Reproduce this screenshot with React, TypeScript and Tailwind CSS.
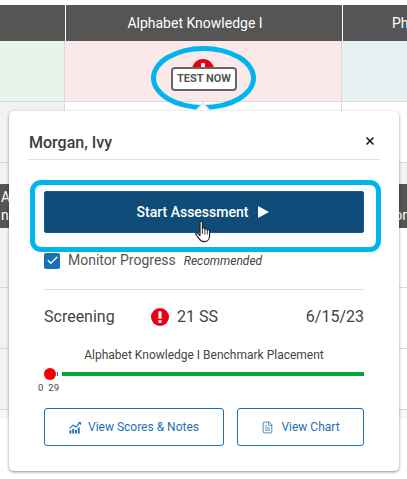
import { Check, FileText, X } from "lucide-react";

function AlertDot({ className }: { className: string }) {
  return (
    <span className={`flex items-center justify-center rounded-full bg-[#e60012] ${className}`}>
      <svg viewBox="0 0 18 18" className="h-full w-full">
        <rect x="7.4" y="3.2" width="3.2" height="7.6" rx="0.8" fill="#fff" />
        <rect x="7.4" y="12" width="3.2" height="3" rx="0.8" fill="#fff" />
      </svg>
    </span>
  );
}

function ChartIcon() {
  return (
    <svg viewBox="0 0 14 13" className="h-[13px] w-[13px]" fill="#1c6fb5">
      <rect x="0.5" y="9.5" width="2" height="3.5" />
      <rect x="3.5" y="8" width="2" height="5" />
      <rect x="6.5" y="9" width="2" height="4" />
      <rect x="9.5" y="6.5" width="2" height="6.5" />
      <path d="M0.5 7.5 L4.5 4 L7.5 6 L11.5 1.5" fill="none" stroke="#1c6fb5" strokeWidth="1.2" />
      <path d="M9.5 0.5 H13 V4 Z" />
    </svg>
  );
}

function HandCursor() {
  return (
    <svg viewBox="0 0 18 24" className="absolute left-[195px] top-[220px] h-6 w-[18px]">
      <path
        d="M5 2.2c0-1.5 2.4-1.5 2.4 0v6.3c.2-1.2 2.4-1.2 2.5.2v.6c.3-1.1 2.3-1 2.4.3v.7c.4-.9 2.2-.7 2.3.6v4.6c0 3-1.7 6.2-5.2 6.2-2.6 0-4-.9-5.1-2.8L1 14.6c-.7-1.3.9-2.3 1.9-1.2L5 15.5Z"
        fill="#fff"
        stroke="#222"
        strokeWidth="1.2"
        strokeLinejoin="round"
      />
      <path d="M7.4 9v5M9.9 9.5v5M12.3 10.5v4" stroke="#222" strokeWidth="0.9" fill="none" />
    </svg>
  );
}

const Cell = ({ className }: { className: string }) => <div className={className} />;

function Row({ height, left = "bg-[#f2f2f2]", mid = "bg-white", right = "bg-white" }: { height: string; left?: string; mid?: string; right?: string }) {
  return (
    <div className={`grid grid-cols-[65px_277px_65px] border-b border-[#d9d9d9] ${height}`}>
      <Cell className={`${left} border-r border-[#d9d9d9]`} />
      <Cell className={`${mid} border-r border-[#d9d9d9]`} />
      <Cell className={right} />
    </div>
  );
}

export default function App() {
  return (
    <div className="relative h-[479px] w-[407px] overflow-hidden bg-white font-['Roboto',sans-serif] text-[#3d3d3d]">
      <div className="pt-[5px]">
        <div className="grid h-[36px] grid-cols-[66px_277px_64px] bg-[#555555] text-[14px] text-white">
          <div className="border-r border-white" />
          <div className="flex items-center justify-center border-r border-white pr-[18px]">Alphabet Knowledge I</div>
          <div className="flex items-center overflow-hidden whitespace-nowrap pl-[49px]">Phonics</div>
        </div>
        <Row height="h-[61px]" left="bg-[#e8f4ea]" mid="bg-[#fbe8e8]" right="bg-[#e8f0f4]" />
        <Row height="h-[61px]" />
        <div className="h-[21px] bg-[#f2f2f2]" />
        <div className="flex h-[44px] justify-between bg-[#555555] text-[14px] leading-[18px] text-white">
          <div className="flex flex-col justify-center pl-[1px]">
            <span>A</span>
            <span>no</span>
          </div>
          <div className="flex flex-col justify-center text-right">
            <span>&nbsp;</span>
            <span>or</span>
          </div>
        </div>
        <Row height="h-[60px]" />
        <Row height="h-[61px]" />
        <Row height="h-[61px]" />
        <div className="h-[9px] bg-[#f7f7f7]" />
      </div>

      {/* test now badge */}
      <AlertDot className="absolute left-[192px] top-[59px] h-[22px] w-[22px]" />
      <div className="absolute left-[171px] top-[67px] flex h-[24px] w-[66px] items-center justify-center rounded-[4px] border-2 border-[#666666] bg-white text-[11px] font-bold text-[#555555]">
        TEST NOW
      </div>
      <div className="absolute left-[151px] top-[46px] h-[64px] w-[105px] rounded-[50%] border-[5px] border-[#00b5ef]" />

      {/* popover */}
      <div className="absolute left-[197px] top-[105px] h-3 w-3 rotate-45 border-l border-t border-[#d9d9d9] bg-white" />
      <div className="absolute left-[9px] top-[111px] flex h-[360px] w-[390px] flex-col rounded-[5px] bg-white px-[20px] shadow-[0_1px_3px_rgba(0,0,0,0.45)]">
        <div className="flex h-[49px] items-center justify-between border-b border-[#dddddd] pt-[16px]">
          <span className="text-[16px] font-medium text-[#3d3d3d]">Morgan, Ivy</span>
          <X className="mb-[4px] mr-[3px] h-3 w-3 text-[#222222]" strokeWidth={3.5} />
        </div>
        <div className="mx-[15px] flex flex-1 flex-col">
          <button className="mt-[31px] flex h-[42px] items-center justify-center gap-[10px] rounded-[2px] border border-[#1c5c94] bg-[#0f4c7a] pr-[2px] text-[14px] font-medium text-white">
            Start Assessment
            <svg viewBox="0 0 11 12" className="h-[12px] w-[11px]" fill="#fff">
              <path d="M0 0 L11 6 L0 12 Z" />
            </svg>
          </button>
          <div className="mt-[17px] flex items-center">
            <span className="flex h-4 w-4 items-center justify-center rounded-[2px] bg-[#1b6fb5]">
              <Check className="h-[13px] w-[13px] text-white" strokeWidth={2.5} />
            </span>
            <span className="ml-2 text-[14px] text-[#555555]">Monitor Progress</span>
            <span className="ml-2 text-[12px] italic text-[#444444]">Recommended</span>
          </div>
          <div className="mt-[18px] flex items-center border-t border-[#dddddd] pt-[15px] text-[16px] text-[#444444]">
            <span className="w-[107px]">Screening</span>
            <AlertDot className="h-[18px] w-[18px]" />
            <span className="ml-2 flex-1">21 SS</span>
            <span>6/15/23</span>
          </div>
          <div className="mt-[19px] text-center text-[12px] leading-[14px] text-[#444444]">
            Alphabet Knowledge I Benchmark Placement
          </div>
          <div className="mt-[6px] flex h-[12px] items-center">
            <span className="h-3 w-3 rounded-full bg-[#f00000]" />
            <span className="ml-[1px] h-1 w-[1px] bg-[#1b6fb5]" />
            <span className="ml-[4px] h-1 flex-1 bg-[#00a831]" />
          </div>
          <div className="ml-[-6px] mt-[2px] flex gap-[5px] text-[9.5px] leading-[12px] text-[#444444]">
            <span>0</span>
            <span>29</span>
          </div>
          <div className="mt-[14px] flex gap-[13px] text-[12px] text-[#1c6fb5]">
            <button className="flex h-[38px] w-[180px] items-center justify-center gap-[6px] rounded-[3px] border border-[#1c6fb5]">
              <ChartIcon />
              View Scores &amp; Notes
            </button>
            <button className="flex h-[38px] w-[127px] items-center justify-center gap-[7px] rounded-[3px] border border-[#1c6fb5]">
              <FileText className="h-[13px] w-[13px]" strokeWidth={1.5} />
              View Chart
            </button>
          </div>
        </div>
      </div>

      {/* start highlight */}
      <div className="absolute left-[30px] top-[180px] h-[72px] w-[351px] rounded-[11px] border-[5px] border-[#00b5ef]" />
      <HandCursor />
    </div>
  );
}
